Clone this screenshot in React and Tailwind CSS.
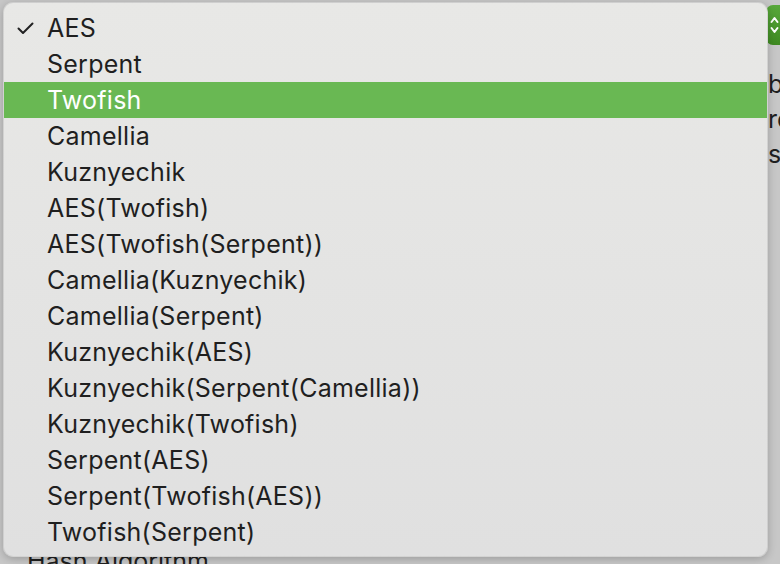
import React from "react";

const items = [
  "AES",
  "Serpent",
  "Twofish",
  "Camellia",
  "Kuznyechik",
  "AES(Twofish)",
  "AES(Twofish(Serpent))",
  "Camellia(Kuznyechik)",
  "Camellia(Serpent)",
  "Kuznyechik(AES)",
  "Kuznyechik(Serpent(Camellia))",
  "Kuznyechik(Twofish)",
  "Serpent(AES)",
  "Serpent(Twofish(AES))",
  "Twofish(Serpent)",
];

function Check() {
  return (
    <svg width="17" height="13" viewBox="0 0 17 13" fill="none">
      <path d="M1.5 6.5 L6 11 L15.5 1.5" stroke="#222" strokeWidth="2" strokeLinecap="round" strokeLinejoin="round" />
    </svg>
  );
}

export default function App() {
  const selected = "AES";
  const hovered = "Twofish";

  return (
    <div className="relative w-[780px] h-[564px] overflow-hidden bg-[#c7c7c7] font-['Inter',sans-serif] text-[25px] text-[#1f1f1f]">
      {/* window behind the menu */}
      <div className="grid grid-cols-[766px_1fr] h-full">
        <div className="pl-[27px] pt-[546px] leading-[30px]">Hash Algorithm</div>
        <div className="flex flex-col pt-[5px]">
          <div className="w-[40px] h-[40px] rounded-[7px] bg-gradient-to-b from-[#58a83a] to-[#3f8a22] flex items-center pl-[4px]">
            <svg width="9" height="22" viewBox="0 0 9 22" fill="none">
              <path d="M1.5 8 L4.5 4 L7.5 8 M1.5 14 L4.5 18 L7.5 14" stroke="white" strokeWidth="2" strokeLinecap="round" strokeLinejoin="round" />
            </svg>
          </div>
          <div className="pl-[2px] pt-[22px] leading-[35px] whitespace-nowrap">
            <div>be</div>
            <div>re</div>
            <div>se</div>
          </div>
        </div>
      </div>

      {/* popup menu */}
      <div className="absolute left-[3px] top-[2px] w-[765px] h-[555px] rounded-[10px] bg-gradient-to-b from-[#e8e8e6] to-[#e0e0e0] shadow-[0_2px_8px_rgba(0,0,0,0.22)] border border-[#bdbdbd]/50 py-[7px]">
        {items.map((name) => {
          const active = name === hovered;
          return (
            <div
              key={name}
              className={
                "h-[36px] flex items-center leading-none tracking-[0.25px] " +
                (active ? "bg-[#69b853] text-white" : "")
              }
            >
              <div className="w-[43px] pl-[13px] flex items-center">
                {name === selected && <Check />}
              </div>
              <span>{name}</span>
            </div>
          );
        })}
      </div>
    </div>
  );
}
